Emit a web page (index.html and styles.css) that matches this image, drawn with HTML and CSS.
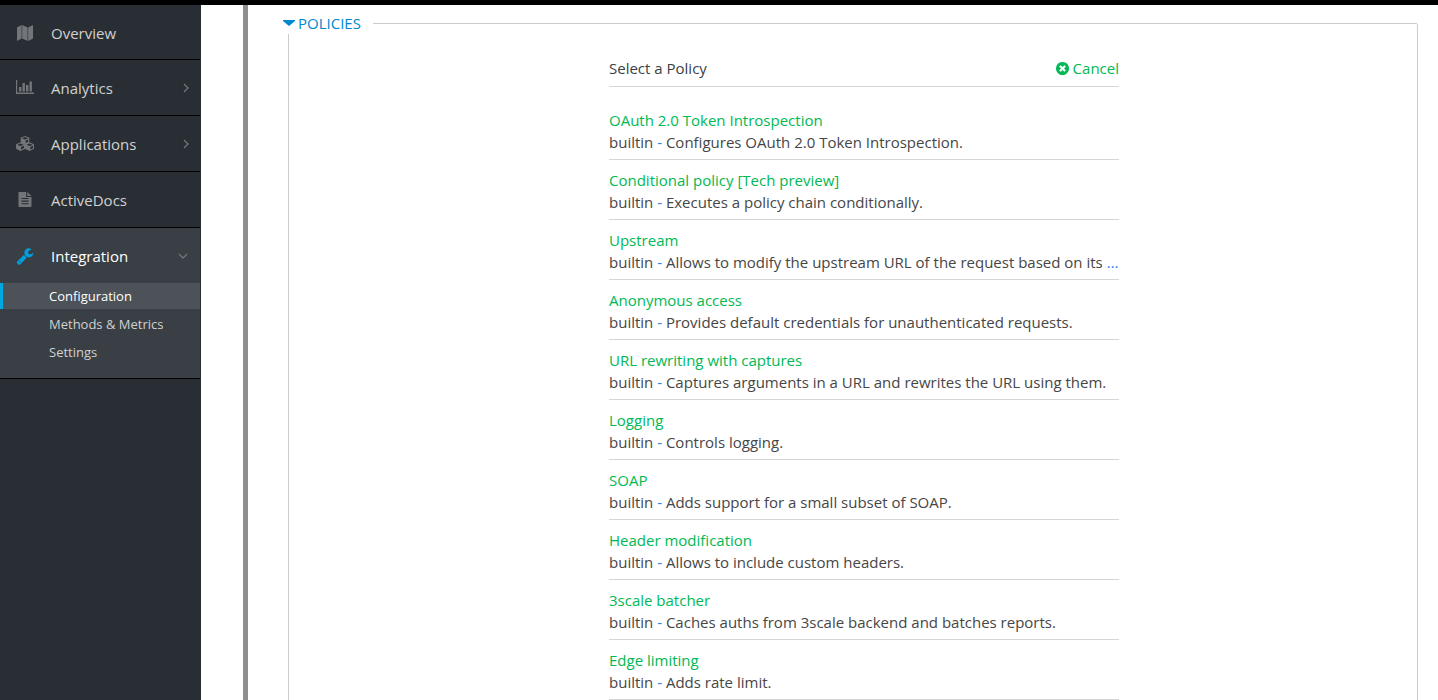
FILE: index.html
```html
<!DOCTYPE html>
<html lang="en">
<head>
<meta charset="utf-8">
<title>Integration - Configuration</title>
<link rel="stylesheet" href="styles.css">
</head>
<body>
<header class="topbar"></header>
<div class="shell">
  <nav class="sidebar" aria-label="Main">
    <a class="nav-item" href="#overview">
      <svg class="icon" viewBox="0 0 18 18"><path d="M1 3.6 5.600 1v13.400L1 17zM6.200 1l5.400 2.600V17l-5.400-2.600zM12.200 3.600 17 1v13.400L12.200 17z"/></svg>
      <span class="nav-label">Overview</span>
    </a>
    <a class="nav-item" href="#analytics">
      <svg class="icon" viewBox="0 0 18 18"><path d="M0 1h1.200v12.600H18V15H0zM3 8h2.400v4.600H3zM6.500 4h2.400v8.600H6.500zM10 6h2.400v6.600H10zM13.500 2.500h2.400v10.100h-2.400z"/></svg>
      <span class="nav-label">Analytics</span>
      <svg class="chevron" viewBox="0 0 12 12"><path d="m4 2 4 4-4 4"/></svg>
    </a>
    <a class="nav-item" href="#applications">
      <svg class="icon icon-wide" viewBox="0 0 20 18"><path fill-rule="evenodd" d="m10 1 4.300 1.700v4.500L19 9.200v4.600L14.700 16 10 13.900 5.300 16 1 13.800V9.200l4.700-2V2.700zM7 3.200l3 1.200 3-1.200-3-1.100zM10.700 7.900l2.500-1.100V4.500l-2.500 1zM2.300 9.700l3.100 1.200 3.100-1.200-3.100-1.200zM6 14.500l3-1.400v-2.300l-3 1.300zM11.500 9.700l3.100 1.200 3.100-1.200-3.100-1.200zM15.300 14.500l2.700-1.400v-2.300l-2.700 1.300z"/></svg>
      <span class="nav-label">Applications</span>
      <svg class="chevron" viewBox="0 0 12 12"><path d="m4 2 4 4-4 4"/></svg>
    </a>
    <a class="nav-item" href="#activedocs">
      <svg class="icon" viewBox="0 0 18 18"><path fill-rule="evenodd" d="M2.500 1h7.700v5h5.300v9.200q0 .8-.8.8H3.300q-.8 0-.8-.8zM11.300 1l4.200 4h-4.200zM5.500 7v1.100h7V7zm0 2.600v1.100h7V9.600zm0 2.600v1.100h7v-1.100z"/></svg>
      <span class="nav-label">ActiveDocs</span>
    </a>
    <div class="nav-group">
      <a class="nav-item nav-item-active" href="#integration">
        <svg class="icon" viewBox="0 0 1792 1792"><path d="M448 1472q0-26-19-45t-45-19-45 19-19 45 19 45 45 19 45-19 19-45zm644-420l-682 682q-37 37-90 37-52 0-91-37l-106-108q-38-36-38-90 0-53 38-91l681-681q39 98 114.500 173.500t173.500 114.500zm634-435q0 39-23 106-47 134-164.500 217.500t-258.500 83.500q-185 0-316.500-131.500t-131.500-316.500 131.500-316.500 316.500-131.500q58 0 121.500 16.500t107.500 46.500q16 11 16 28t-16 28l-293 169v224l193 107q5-3 79-48.500t135.500-81 70.500-35.500q15 0 23.500 10t8.500 25z"/></svg>
        <span class="nav-label">Integration</span>
        <svg class="chevron chevron-open" viewBox="0 0 12 12"><path d="m2 4 4 4 4-4"/></svg>
      </a>
      <ul class="subnav">
        <li><a class="subnav-link subnav-current" href="#configuration" aria-current="page">Configuration</a></li>
        <li><a class="subnav-link" href="#methods">Methods &amp; Metrics</a></li>
        <li><a class="subnav-link" href="#settings">Settings</a></li>
      </ul>
    </div>
  </nav>
  <main class="content">
    <fieldset class="policies">
      <legend class="policies-legend"><svg class="caret" viewBox="0 0 12 8"><path d="M0 1h12v1L6 7 0 2z"/></svg>POLICIES</legend>
      <section class="picker">
        <header class="picker-header">
          <h2 class="picker-title">Select a Policy</h2>
          <button class="cancel" type="button"><svg class="cancel-icon" viewBox="128 128 1536 1536"><path d="M1277 1122q0-26-19-45l-181-181 181-181q19-19 19-45 0-27-19-46l-90-90q-19-19-46-19-26 0-45 19l-181 181-181-181q-19-19-45-19-27 0-46 19l-90 90q-19 19-19 46 0 26 19 45l181 181-181 181q-19 19-19 45 0 27 19 46l90 90q19 19 46 19 26 0 45-19l181-181 181 181q19 19 45 19 27 0 46-19l90-90q19-19 19-46zm387-226q0 209-103 385.500t-279.500 279.500-385.500 103-385.500-103-279.500-279.500-103-385.500 103-385.500 279.500-279.500 385.500-103 385.500 103 279.500 279.500 103 385.500z"/></svg>Cancel</button>
        </header>
        <ul class="policy-list">
          <li class="policy"><a class="policy-name" href="#p1">OAuth 2.0 Token Introspection</a><p class="policy-info"><span>builtin</span> - <span>Configures OAuth 2.0 Token Introspection.</span></p></li>
          <li class="policy"><a class="policy-name" href="#p2">Conditional policy [Tech preview]</a><p class="policy-info"><span>builtin</span> - <span>Executes a policy chain conditionally.</span></p></li>
          <li class="policy"><a class="policy-name" href="#p3">Upstream</a><p class="policy-info"><span>builtin</span> - <span>Allows to modify the upstream URL of the request based on its</span> …</p></li>
          <li class="policy"><a class="policy-name" href="#p4">Anonymous access</a><p class="policy-info"><span>builtin</span> - <span>Provides default credentials for unauthenticated requests.</span></p></li>
          <li class="policy"><a class="policy-name" href="#p5">URL rewriting with captures</a><p class="policy-info"><span>builtin</span> - <span>Captures arguments in a URL and rewrites the URL using them.</span></p></li>
          <li class="policy"><a class="policy-name" href="#p6">Logging</a><p class="policy-info"><span>builtin</span> - <span>Controls logging.</span></p></li>
          <li class="policy"><a class="policy-name" href="#p7">SOAP</a><p class="policy-info"><span>builtin</span> - <span>Adds support for a small subset of SOAP.</span></p></li>
          <li class="policy"><a class="policy-name" href="#p8">Header modification</a><p class="policy-info"><span>builtin</span> - <span>Allows to include custom headers.</span></p></li>
          <li class="policy"><a class="policy-name" href="#p9">3scale batcher</a><p class="policy-info"><span>builtin</span> - <span>Caches auths from 3scale backend and batches reports.</span></p></li>
          <li class="policy"><a class="policy-name" href="#p10">Edge limiting</a><p class="policy-info"><span>builtin</span> - <span>Adds rate limit.</span></p></li>
        </ul>
      </section>
    </fieldset>
  </main>
</div>
</body>
</html>
```
FILE: styles.css
```css
* { box-sizing: border-box; }

body {
  margin: 0;
  height: 100vh;
  overflow: hidden;
  display: flex;
  flex-direction: column;
  font: 15px/22px "Open Sans", "Noto Sans", sans-serif;
  color: #464646;
  background: #fff;
}

a { color: inherit; text-decoration: none; }
ul { list-style: none; margin: 0; padding: 0; }

.topbar { flex: none; height: 5px; background: #000; }

.shell { flex: 1; min-height: 0; display: flex; }

/* Sidebar */
.sidebar {
  flex: none;
  width: 201px;
  background: #292e34;
  border-right: 1px solid #292e34;
  color: #d1d1d1;
}

.nav-item {
  display: flex;
  align-items: center;
  height: 56px;
  padding: 0 8px 0 16px;
  border-bottom: 1px solid #030303;
}

.nav-item:first-child { height: 55px; padding-top: 1px; }

.icon { flex: none; width: 18px; height: 18px; margin-right: 17px; fill: #72767b; }
.icon-wide { width: 20px; margin: 0 16px 0 -1px; }
.nav-label { flex: 1; }

.chevron {
  width: 12px;
  height: 12px;
  fill: none;
  stroke: #72767b;
  stroke-width: 1.3;
}

.nav-group {
  background: #393f44;
  border-bottom: 1px solid #030303;
  padding-bottom: 13px;
}

.nav-group .nav-item { height: 55px; padding: 0 11px 0 16px; border: 0; color: #fff; }
.nav-item-active .icon { fill: #00a0df; }

.subnav { display: grid; gap: 2px; font-size: 13px; line-height: 26px; }

.subnav-link { display: block; padding-left: 46px; border-left: 3px solid transparent; }
.subnav-current { background: #4d5258; border-left-color: #00a8e1; color: #fff; }

/* Main area */
.content {
  flex: 1;
  min-width: 0;
  margin-left: 42px;
  padding: 7px 20px 0 40px;
  border-left: 5px solid #8f8f8f;
}

.policies {
  margin: 0;
  min-width: 0;
  padding: 19px 0 24px 22px;
  border: 1px solid #ccc;
  border-radius: 2px;
}

.policies-legend {
  display: flex;
  align-items: center;
  gap: 3px;
  margin-left: -28px;
  padding: 0 12px 0 0;
  background: #fff;
  color: #0088ce;
}

.caret { width: 12px; height: 8px; fill: #0088ce; }

.picker { max-width: 510px; margin: 0 auto; }

.picker-header {
  display: flex;
  justify-content: space-between;
  padding: 4px 0 7px;
  border-bottom: 1px solid #d6d6d6;
}

.picker-title { margin: 0; font: inherit; color: #393f44; }

.cancel {
  display: flex;
  align-items: center;
  gap: 4px;
  padding: 0;
  border: 0;
  background: none;
  font: inherit;
  color: #00b954;
}

.cancel-icon { width: 13px; height: 13px; fill: #00b954; }

.policy-list { padding-top: 13px; }
.policy { padding: 9px 0 6px; border-bottom: 1px solid #d6d6d6; }
.policy-name { display: block; color: #00b954; }

.policy-info {
  margin: 0;
  white-space: nowrap;
  color: #2b80ee;
}

.policy-info span { color: #464646; }
```
